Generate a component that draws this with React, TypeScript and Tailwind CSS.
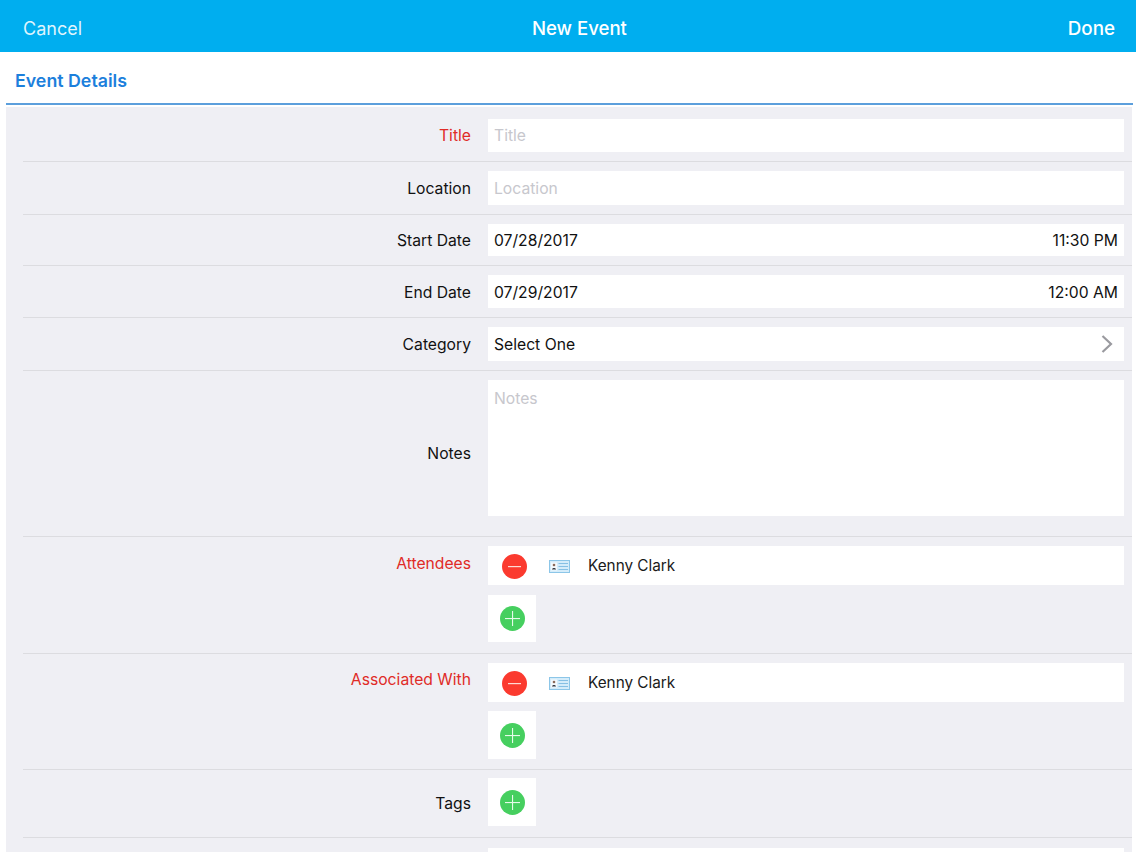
import React from "react";

function Row({ label, red, rowCls, labelCls, children }: { label?: string; red?: boolean; rowCls: string; labelCls?: string; children?: React.ReactNode }) {
  return (
    <div className={`flex border-b border-[#dcdce0] pr-2 ${rowCls}`}>
      <div className={`w-[448px] shrink-0 flex justify-end text-[15.7px] leading-[20px] ${red ? "text-[#e02b27]" : "text-[#111111]"} ${labelCls ?? "items-center pt-[2px]"}`}>
        {label}
      </div>
      <div className="ml-[17px] flex-1 flex flex-col">{children}</div>
    </div>
  );
}

function Field({ cls, children }: { cls: string; children?: React.ReactNode }) {
  return <div className={`bg-white flex items-center justify-between pl-[6px] pr-[6px] text-[15.7px] text-[#111111] ${cls}`}>{children}</div>;
}

const Placeholder = ({ children }: { children: React.ReactNode }) => <span className="text-[#c7c7cd]">{children}</span>;

function Minus() {
  return (
    <svg width="25" height="25" viewBox="0 0 25 25" className="shrink-0">
      <circle cx="12.5" cy="12.5" r="12.5" fill="#fb3a2f" />
      <rect x="6" y="12" width="13" height="1.2" fill="#ffd9d4" />
    </svg>
  );
}

function Plus() {
  return (
    <svg width="25" height="25" viewBox="0 0 25 25" className="shrink-0">
      <circle cx="12.5" cy="12.5" r="12.5" fill="#46cf5f" />
      <rect x="5" y="12" width="15" height="1.1" fill="#e6fbe9" />
      <rect x="12" y="5" width="1.1" height="15" fill="#e6fbe9" />
    </svg>
  );
}

function Card() {
  return (
    <svg width="21" height="13" viewBox="0 0 21 13" className="shrink-0 block">
      <rect x="0.5" y="0.5" width="20" height="12" fill="#d4ecfa" stroke="#8cc6e8" />
      <rect x="2" y="2.5" width="6" height="8" fill="#f4f9fc" />
      <circle cx="5" cy="5" r="1.3" fill="#8a6a5a" />
      <path d="M3 9.5c0-2 4-2 4 0z" fill="#333a44" />
      <path d="M9.5 3.5h9.5M9.5 6.5h9.5M9.5 9.5h9.5" stroke="#86c0e4" strokeWidth="1" />
    </svg>
  );
}

function Person({ cls }: { cls: string }) {
  return (
    <div className={`bg-white flex items-center pl-[14px] pt-[2px] text-[15.3px] text-[#1a1a1a] ${cls}`}>
      <Minus />
      <span className="ml-[22px]"><Card /></span>
      <span className="ml-[18px]">Kenny Clark</span>
    </div>
  );
}

const AddBtn = ({ cls }: { cls: string }) => (
  <div className={`bg-white w-[48px] flex items-center justify-center ${cls}`}>
    <Plus />
  </div>
);

export default function App() {
  return (
    <div className="w-[1136px] h-[852px] overflow-hidden bg-white flex flex-col font-['Inter','Liberation_Sans',sans-serif]">
      <header className="h-[52px] shrink-0 bg-[#00aeef] flex items-center justify-between pl-[23px] pr-[21px] pt-[4px] text-[18px] text-white">
        <span className="text-[#dff4fd]">Cancel</span>
        <span className="font-medium text-[18.6px] ml-[9px] pt-[2px]">New Event</span>
        <span className="font-medium text-[18.8px] pt-[2px]">Done</span>
      </header>
      <div className="h-[51px] shrink-0 flex items-center pl-[15px] pt-[7px] text-[17.8px] font-semibold text-[#1c7fdc]">Event Details</div>
      <div className="ml-[6px] mr-[3px] h-[2px] shrink-0 bg-[#5c9fdc]" />
      <div className="ml-[6px] mr-[4px] mt-[2px] flex-1 bg-[#efeff4] pl-[17px] pt-[2px]">
        <Row label="Title" red labelCls="items-start pt-[7px]" rowCls="pt-[10px] pb-[9px]">
          <Field cls="h-[33px]"><Placeholder>Title</Placeholder></Field>
        </Row>
        <Row label="Location" rowCls="py-[9px]">
          <Field cls="h-[34px] pt-[2px]"><Placeholder>Location</Placeholder></Field>
        </Row>
        <Row label="Start Date" rowCls="py-[9px]">
          <Field cls="h-[32px] pt-[2px]"><span>07/28/2017</span><span>11:30 PM</span></Field>
        </Row>
        <Row label="End Date" rowCls="py-[9px]">
          <Field cls="h-[33px] pt-[2px]"><span>07/29/2017</span><span>12:00 AM</span></Field>
        </Row>
        <Row label="Category" rowCls="py-[9px]">
          <Field cls="h-[34px]">
            <span className="pt-[2px]">Select One</span>
            <svg width="12" height="18" viewBox="0 0 12 18" className="mr-[5px]">
              <path d="M1.5 1 L10 9 L1.5 17" fill="none" stroke="#9a9a9f" strokeWidth="2.2" />
            </svg>
          </Field>
        </Row>
        <Row label="Notes" labelCls="items-start pt-[64px]" rowCls="pt-[9px] pb-[20px]">
          <div className="bg-white h-[136px] pl-[6px] pt-[9px] text-[15.7px] leading-[20px]"><Placeholder>Notes</Placeholder></div>
        </Row>
        <Row label="Attendees" red labelCls="items-start pt-[8px]" rowCls="pt-[9px] pb-[11px]">
          <Person cls="h-[39px]" />
          <AddBtn cls="h-[47px] mt-[10px]" />
        </Row>
        <Row label="Associated With" red labelCls="items-start pt-[7px]" rowCls="pt-[9px] pb-[10px]">
          <Person cls="h-[39px]" />
          <AddBtn cls="h-[48px] mt-[9px]" />
        </Row>
        <Row label="Tags" labelCls="items-center pt-[4px]" rowCls="pt-[8px] pb-[11px]">
          <AddBtn cls="h-[48px]" />
        </Row>
        <div className="flex pt-[10px] pr-2">
          <div className="w-[448px] shrink-0" />
          <div className="ml-[17px] flex-1 bg-white h-[40px]" />
        </div>
      </div>
    </div>
  );
}
